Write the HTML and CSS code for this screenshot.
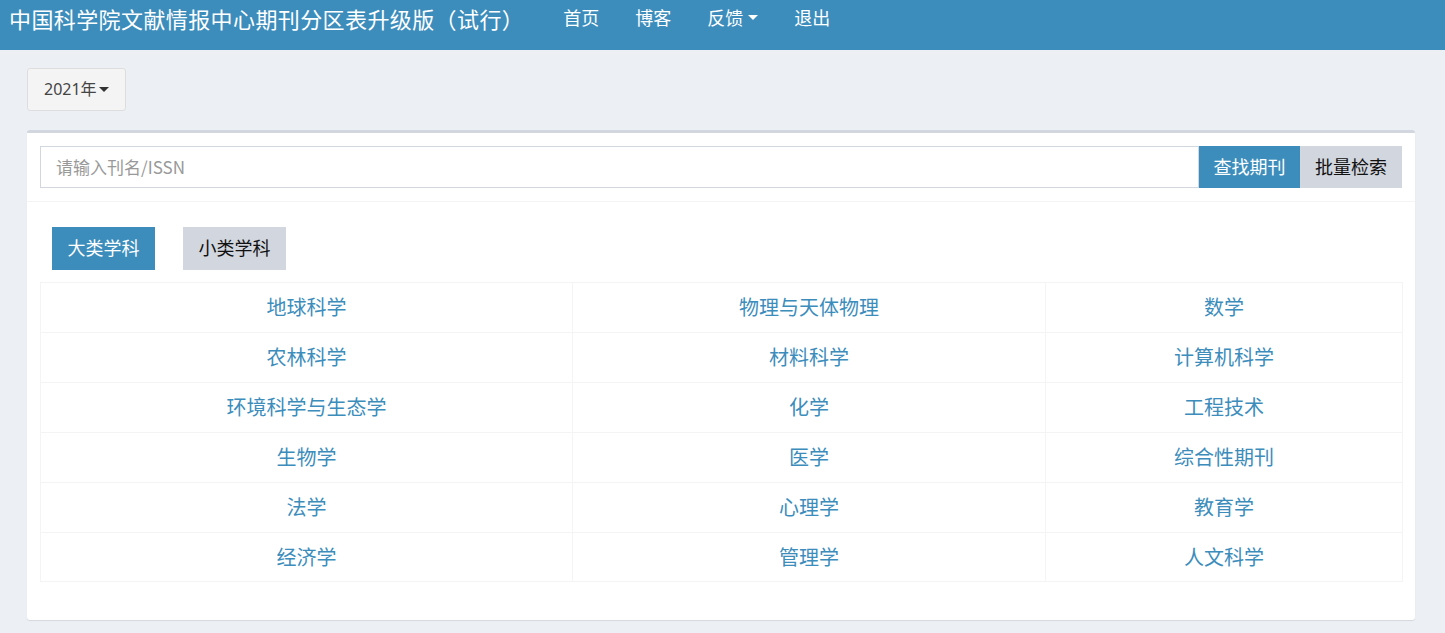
FILE: index.html
```html
<!DOCTYPE html>
<html lang="zh-CN">
<head>
<meta charset="utf-8">
<title>中国科学院文献情报中心期刊分区表升级版（试行）</title>
<link rel="stylesheet" href="styles.css">
</head>
<body>
<header class="navbar">
  <div class="brand">中国科学院文献情报中心期刊分区表升级版（试行）</div>
  <ul class="nav">
    <li class="nav-item">首页</li>
    <li class="nav-item">博客</li>
    <li class="nav-item">反馈<span class="caret caret-white"></span></li>
    <li class="nav-item">退出</li>
  </ul>
</header>
<main class="content">
  <div class="year-row">
    <button class="year-btn">2021年<span class="caret caret-dark"></span></button>
  </div>
  <section class="box">
    <div class="box-header">
      <div class="search-group">
        <input class="search-input" type="text" placeholder="请输入刊名/ISSN">
        <button class="btn btn-primary">查找期刊</button>
        <button class="btn btn-grey">批量检索</button>
      </div>
    </div>
    <div class="box-body">
      <div class="tabs">
        <button class="tab tab-active">大类学科</button>
        <button class="tab tab-grey">小类学科</button>
      </div>
      <table class="subjects">
        <colgroup>
          <col class="c1"><col class="c2"><col class="c3">
        </colgroup>
        <tbody>
          <tr><td>地球科学</td><td>物理与天体物理</td><td>数学</td></tr>
          <tr><td>农林科学</td><td>材料科学</td><td>计算机科学</td></tr>
          <tr><td>环境科学与生态学</td><td>化学</td><td>工程技术</td></tr>
          <tr><td>生物学</td><td>医学</td><td>综合性期刊</td></tr>
          <tr><td>法学</td><td>心理学</td><td>教育学</td></tr>
          <tr class="last"><td>经济学</td><td>管理学</td><td>人文科学</td></tr>
        </tbody>
      </table>
    </div>
  </section>
</main>
</body>
</html>
```
FILE: styles.css
```css
* { box-sizing: border-box; }
html, body { margin: 0; padding: 0; }
body {
  background: #ecf0f5;
  font-family: "Noto Sans", "Noto Sans CJK SC", sans-serif;
  color: #333;
  font-size: 18px;
}
.navbar {
  height: 50px;
  background: #3c8dbc;
  display: flex;
  align-items: flex-start;
  color: #fff;
}
.brand {
  font-family: "Noto Sans CJK SC", sans-serif;
  font-size: 22px;
  letter-spacing: 0.4px;
  line-height: 30px;
  padding: 3px 10px 0 9px;
  white-space: nowrap;
}
.nav {
  list-style: none;
  margin: 0 0 0 11px;
  padding: 0;
  display: flex;
}
.nav-item {
  font-family: "Noto Sans CJK SC", sans-serif;
  font-size: 18px;
  line-height: 26px;
  padding: 2px 18px 0;
  display: flex;
  align-items: center;
  height: 32px;
}
.caret {
  display: inline-block;
  width: 0;
  height: 0;
  border-left: 5px solid transparent;
  border-right: 5px solid transparent;
  border-top: 5px solid #fff;
  margin-left: 5px;
}
.caret-white { border-top-color: #fff; }
.caret-dark { border-top-color: #333; margin-left: 2px; vertical-align: middle; }

.content {
  padding: 18px 30px 20px 27px;
}
.year-row { margin-bottom: 19px; }
.year-btn {
  font-family: "Noto Sans", "Noto Sans CJK SC", sans-serif;
  font-size: 16px;
  line-height: 22px;
  height: 43px;
  padding: 0 16px 1px;
  background: #f4f4f4;
  border: 1px solid #ddd;
  border-radius: 3px;
  color: #444;
  display: inline-flex;
  align-items: center;
}
.box {
  background: #fff;
  border-top: 3px solid #d2d6de;
  border-radius: 3px;
  box-shadow: 0 1px 1px rgba(0,0,0,0.1);
}
.box-header {
  padding: 13px;
  border-bottom: 1px solid #f4f4f4;
}
.search-group {
  display: flex;
  height: 42px;
}
.search-input {
  flex: 1;
  height: 42px;
  border: 1px solid #d2d6de;
  padding: 0 15px 1px;
  font-family: "Noto Sans CJK SC", sans-serif;
  font-size: 17px;
  color: #555;
  outline: none;
}
.search-input::placeholder { color: #999; }
.btn {
  border: none;
  height: 42px;
  font-family: "Noto Sans CJK SC", sans-serif;
  font-size: 18px;
  padding: 0 0 2px;
  width: 101px;
}
.btn-primary { background: #3c8dbc; color: #fff; }
.btn-grey { background: #d2d6de; color: #111; width: 102px; }

.box-body {
  padding: 25px 13px 38px;
}
.tabs {
  display: flex;
  gap: 28px;
  padding-left: 12px;
  margin-bottom: 12px;
}
.tab {
  border: none;
  height: 43px;
  width: 103px;
  padding: 0 0 3px;
  font-family: "Noto Sans CJK SC", sans-serif;
  font-size: 18px;
}
.tab-active { background: #3c8dbc; color: #fff; }
.tab-grey { background: #d2d6de; color: #111; }

.subjects {
  width: 100%;
  border-collapse: collapse;
  table-layout: fixed;
  border: 1px solid #f4f4f4;
}
.c1 { width: 532px; }
.c2 { width: 473px; }
.c3 { width: 357px; }
.subjects td {
  border: 1px solid #f4f4f4;
  text-align: center;
  color: #3c8dbc;
  font-family: "Noto Sans CJK SC", sans-serif;
  font-size: 20px;
  height: 50px;
  padding: 0 8px 2px;
  vertical-align: middle;
}
.subjects .last td { height: 49px; }
```
